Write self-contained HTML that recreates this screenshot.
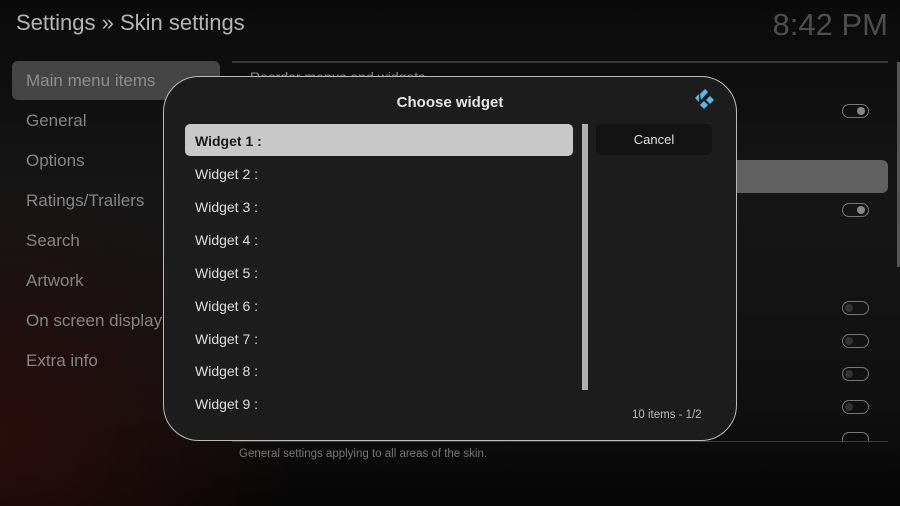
<!DOCTYPE html>
<html><head><meta charset="utf-8"><style>
*{margin:0;padding:0;box-sizing:border-box}
body{width:900px;height:506px;overflow:hidden;position:relative;font-family:"Liberation Sans",sans-serif;
background:radial-gradient(ellipse 300px 260px at 0px 440px,#2a0c0c 0%,rgba(20,8,8,0) 100%),linear-gradient(180deg,#0a0a0a 0%,#161616 40%,#101010 80%,#050505 100%);}
.a{position:absolute}
.title{left:16px;top:10px;font-size:22px;color:#b5b5b5}
.clock{right:12px;top:7px;font-size:31px;color:#4e4e4e}
.menu{left:12px;width:208px;height:39px;color:#858585;font-size:17px;padding:10px 0 0 14px}
.sel{background:#454545;border-radius:6px;color:#8e8e8e}
.tog{width:27px;height:14px;border:1.5px solid #777;border-radius:7px}
.tog i{position:absolute;top:1.5px;width:8px;height:8px;border-radius:50%;background:#777}
.row{left:185px;width:388px;height:32px;font-size:14px;color:#dedede;padding:9px 0 0 10px}
</style></head><body>
<div class="a title">Settings » Skin settings</div>
<div class="a clock">8:42 PM</div>
<div class="a menu sel" style="top:61px">Main menu items</div>
<div class="a menu" style="top:101px">General</div>
<div class="a menu" style="top:141px">Options</div>
<div class="a menu" style="top:181px">Ratings/Trailers</div>
<div class="a menu" style="top:221px">Search</div>
<div class="a menu" style="top:261px">Artwork</div>
<div class="a menu" style="top:301px">On screen display</div>
<div class="a menu" style="top:341px">Extra info</div>
<div class="a" style="left:232px;top:61px;width:656px;height:2px;background:#3a3a3a"></div>
<div class="a" style="left:250px;top:69px;font-size:14px;color:#888">Reorder menus and widgets</div>
<div class="a" style="left:163px;top:160px;width:725px;height:33px;background:#5f605f;border-radius:6px"></div>
<div class="a" style="left:897px;top:62px;width:3px;height:205px;background:#555"></div>
<div class="a tog" style="left:842px;top:104px"><i style="left:14px;background:#888"></i></div>
<div class="a tog" style="left:842px;top:203px"><i style="left:14px;background:#888"></i></div>
<div class="a tog" style="left:842px;top:301px"><i style="left:2px;background:#333"></i></div>
<div class="a tog" style="left:842px;top:334px"><i style="left:2px;background:#333"></i></div>
<div class="a tog" style="left:842px;top:367px"><i style="left:2px;background:#333"></i></div>
<div class="a tog" style="left:842px;top:400px"><i style="left:2px;background:#333"></i></div>
<div class="a tog" style="left:842px;top:432px;height:9px;border-bottom:none;border-radius:7px 7px 0 0"></div>
<div class="a" style="left:232px;top:441px;width:656px;height:1px;background:#3a3a3a"></div>
<div class="a" style="left:239px;top:448px;font-size:11.5px;color:#777">General settings applying to all areas of the skin.</div>

<div class="a" style="left:163px;top:76px;width:574px;height:365px;background:#1d1d1d;border:1.5px solid #bbb;border-radius:36px"></div>
<div class="a" style="left:163px;top:94px;width:574px;text-align:center;font-size:15px;font-weight:bold;color:#e6e6e6">Choose widget</div>
<svg class="a" style="left:694px;top:88px" width="24" height="24" viewBox="0 0 24 24">
<polygon points="1,10 5,6 5,14" fill="#5bb8e2"/><polygon points="6,6 11,1 14,4 7,12" fill="#5bb8e2"/><polygon points="12,12 16,8 20,12 16,16" fill="#5bb8e2"/><polygon points="6,17 10,13 14,17 10,21" fill="#5bb8e2"/></svg>
<div class="a row" style="top:124px;background:#c8c8c8;color:#1a1a1a;border-radius:5px;font-weight:bold">Widget 1 :</div>
<div class="a row" style="top:157px">Widget 2 :</div>
<div class="a row" style="top:190px">Widget 3 :</div>
<div class="a row" style="top:223px">Widget 4 :</div>
<div class="a row" style="top:256px">Widget 5 :</div>
<div class="a row" style="top:289px">Widget 6 :</div>
<div class="a row" style="top:322px">Widget 7 :</div>
<div class="a row" style="top:354px">Widget 8 :</div>
<div class="a row" style="top:387px">Widget 9 :</div>
<div class="a" style="left:582px;top:124px;width:6px;height:266px;background:#b0b0b0"></div>
<div class="a" style="left:596px;top:124px;width:116px;height:31px;background:#131313;border-radius:5px;color:#e0e0e0;font-size:13px;text-align:center;padding-top:8px">Cancel</div>
<div class="a" style="left:632px;top:409px;font-size:11.5px;color:#bbb">10 items - 1/2</div>
</body></html>
